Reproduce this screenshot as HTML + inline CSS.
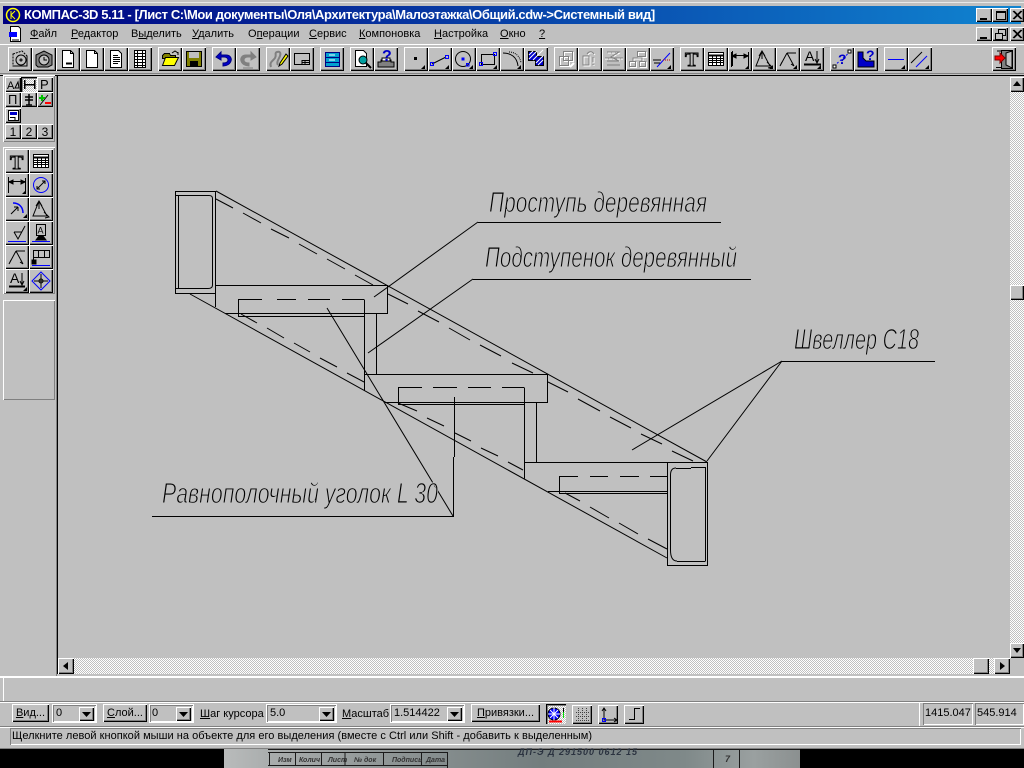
<!DOCTYPE html>
<html lang="ru"><head><meta charset="utf-8"><title>КОМПАС-3D 5.11</title>
<style>
html,body{margin:0;padding:0;background:#000}
body{width:1024px;height:768px;overflow:hidden;position:relative;font-family:"Liberation Sans",sans-serif;color:#000}
#app{position:absolute;left:0;top:0;width:1024px;height:749px;background:#c0c0c0}
#app div,#app span.m{position:absolute;box-sizing:border-box}
.b{background:#c0c0c0;box-shadow:inset 1px 1px #fff,inset -1px -1px #000,inset -2px -2px #808080}
.c{background-image:repeating-conic-gradient(#fff 0 25%,#c0c0c0 0 50%);background-size:2px 2px}
.m{font-size:11px;line-height:14px;top:27px;white-space:nowrap}
.t{font-size:11px;line-height:14px;white-space:nowrap}
.bt{text-align:center;font-size:11px;line-height:16px;white-space:nowrap}
.sunk{box-shadow:inset 1px 1px #808080,inset -1px -1px #fff}
.combo{box-shadow:inset 1px 1px #808080,inset -1px -1px #fff,0 0 0 1px #fff}
.n{font-size:12px;line-height:16px;text-align:center}
svg{position:absolute;left:0;top:0}
svg text{font-family:"Liberation Sans",sans-serif}
u{text-underline-offset:1px}
</style></head><body>
<div id="app">
<!-- top chrome -->
<div style="left:0;top:2px;width:1024px;height:1px;background:#e8e8e8"></div>
<div style="left:3px;top:6px;width:1018px;height:18px;background:linear-gradient(90deg,#000080,#1084d0)"></div>
<div class="t" style="left:24px;top:7px;color:#fff;font-weight:bold;font-size:13px;line-height:16px;letter-spacing:-.4px">КОМПАС-3D 5.11 - [Лист C:\Мои документы\Оля\Архитектура\Малоэтажка\Общий.cdw-&gt;Системный вид]</div>
<div class="b" style="left:976px;top:8px;width:16px;height:14px"></div>
<div class="b" style="left:992px;top:8px;width:16px;height:14px"></div>
<div class="b" style="left:1010px;top:8px;width:14px;height:14px"></div>
<div class="b" style="left:976px;top:27px;width:16px;height:14px"></div>
<div class="b" style="left:992px;top:27px;width:16px;height:14px"></div>
<div class="b" style="left:1010px;top:27px;width:14px;height:14px"></div>
<span class="m" style="left:30px"><u>Ф</u>айл</span>
<span class="m" style="left:71px"><u>Р</u>едактор</span>
<span class="m" style="left:131px">В<u>ы</u>делить</span>
<span class="m" style="left:192px"><u>У</u>далить</span>
<span class="m" style="left:248px">О<u>п</u>ерации</span>
<span class="m" style="left:309px"><u>С</u>ервис</span>
<span class="m" style="left:359px"><u>К</u>омпоновка</span>
<span class="m" style="left:434px"><u>Н</u>астройка</span>
<span class="m" style="left:500px"><u>О</u>кно</span>
<span class="m" style="left:539px"><u>?</u></span>
<div style="left:0;top:44px;width:1024px;height:1px;background:#fff"></div>
<div style="left:0;top:73px;width:1024px;height:1px;background:#808080"></div>
<div style="left:0;top:75px;width:1024px;height:1px;background:#000"></div>
<!-- toolbar buttons -->
<div class="b" style="left:8px;top:47px;width:24px;height:24px"></div>
<div class="b" style="left:32px;top:47px;width:24px;height:24px"></div>
<div class="b" style="left:56px;top:47px;width:24px;height:24px"></div>
<div class="b" style="left:80px;top:47px;width:24px;height:24px"></div>
<div class="b" style="left:104px;top:47px;width:24px;height:24px"></div>
<div class="b" style="left:128px;top:47px;width:24px;height:24px"></div>
<div class="b" style="left:158px;top:47px;width:24px;height:24px"></div>
<div class="b" style="left:182px;top:47px;width:24px;height:24px"></div>
<div class="b" style="left:212px;top:47px;width:24px;height:24px"></div>
<div class="b" style="left:236px;top:47px;width:24px;height:24px"></div>
<div class="b" style="left:266px;top:47px;width:24px;height:24px"></div>
<div class="b" style="left:290px;top:47px;width:24px;height:24px"></div>
<div class="b" style="left:320px;top:47px;width:24px;height:24px"></div>
<div class="b" style="left:350px;top:47px;width:24px;height:24px"></div>
<div class="b" style="left:374px;top:47px;width:24px;height:24px"></div>
<div class="b" style="left:404px;top:47px;width:24px;height:24px"></div>
<div class="b" style="left:428px;top:47px;width:24px;height:24px"></div>
<div class="b" style="left:452px;top:47px;width:24px;height:24px"></div>
<div class="b" style="left:476px;top:47px;width:24px;height:24px"></div>
<div class="b" style="left:500px;top:47px;width:24px;height:24px"></div>
<div class="b" style="left:524px;top:47px;width:24px;height:24px"></div>
<div class="b" style="left:554px;top:47px;width:24px;height:24px"></div>
<div class="b" style="left:578px;top:47px;width:24px;height:24px"></div>
<div class="b" style="left:602px;top:47px;width:24px;height:24px"></div>
<div class="b" style="left:626px;top:47px;width:24px;height:24px"></div>
<div class="b" style="left:650px;top:47px;width:24px;height:24px"></div>
<div class="b" style="left:680px;top:47px;width:24px;height:24px"></div>
<div class="b" style="left:704px;top:47px;width:24px;height:24px"></div>
<div class="b" style="left:728px;top:47px;width:24px;height:24px"></div>
<div class="b" style="left:752px;top:47px;width:24px;height:24px"></div>
<div class="b" style="left:776px;top:47px;width:24px;height:24px"></div>
<div class="b" style="left:800px;top:47px;width:24px;height:24px"></div>
<div class="b" style="left:830px;top:47px;width:24px;height:24px"></div>
<div class="b" style="left:854px;top:47px;width:24px;height:24px"></div>
<div class="b" style="left:884px;top:47px;width:24px;height:24px"></div>
<div class="b" style="left:908px;top:47px;width:24px;height:24px"></div>
<div class="b" style="left:992px;top:47px;width:24px;height:24px"></div>
<!-- left panels -->
<div style="left:3px;top:75px;width:52px;height:67px;box-shadow:inset 1px 1px #fff,inset -1px -1px #808080"></div>
<div class="b" style="left:5px;top:77px;width:16px;height:15px"></div>
<div class="c" style="left:21px;top:77px;width:16px;height:15px;box-shadow:inset 1px 1px #000,inset 2px 2px #808080"></div>
<div class="b" style="left:37px;top:77px;width:16px;height:15px"></div>
<div class="b" style="left:5px;top:92px;width:16px;height:15px"></div>
<div class="b" style="left:21px;top:92px;width:16px;height:15px"></div>
<div class="b" style="left:37px;top:92px;width:16px;height:15px"></div>
<div class="b" style="left:5px;top:108px;width:16px;height:15px"></div>
<div class="b n" style="left:5px;top:124px;width:16px;height:15px">1</div>
<div class="b n" style="left:21px;top:124px;width:16px;height:15px">2</div>
<div class="b n" style="left:37px;top:124px;width:16px;height:15px">3</div>
<div style="left:3px;top:147px;width:52px;height:147px;box-shadow:inset 1px 1px #fff,inset -1px -1px #808080"></div>
<div class="b" style="left:5px;top:149px;width:24px;height:24px"></div><div class="b" style="left:29px;top:149px;width:24px;height:24px"></div>
<div class="b" style="left:5px;top:173px;width:24px;height:24px"></div><div class="b" style="left:29px;top:173px;width:24px;height:24px"></div>
<div class="b" style="left:5px;top:197px;width:24px;height:24px"></div><div class="b" style="left:29px;top:197px;width:24px;height:24px"></div>
<div class="b" style="left:5px;top:221px;width:24px;height:24px"></div><div class="b" style="left:29px;top:221px;width:24px;height:24px"></div>
<div class="b" style="left:5px;top:245px;width:24px;height:24px"></div><div class="b" style="left:29px;top:245px;width:24px;height:24px"></div>
<div class="b" style="left:5px;top:269px;width:24px;height:24px"></div><div class="b" style="left:29px;top:269px;width:24px;height:24px"></div>
<div style="left:3px;top:300px;width:52px;height:100px;box-shadow:inset 1px 1px #fff,inset -1px -1px #808080"></div>
<!-- canvas border -->
<div style="left:56px;top:76px;width:1px;height:600px;background:#808080"></div>
<div style="left:57px;top:76px;width:1px;height:598px;background:#000"></div>
<!-- scrollbars -->
<div class="c" style="left:1010px;top:92px;width:14px;height:551px"></div>
<div class="b" style="left:1010px;top:77px;width:14px;height:15px"></div>
<div class="b" style="left:1010px;top:285px;width:14px;height:15px"></div>
<div class="b" style="left:1010px;top:643px;width:14px;height:15px"></div>
<div class="c" style="left:74px;top:658px;width:920px;height:16px"></div>
<div class="b" style="left:58px;top:658px;width:16px;height:16px"></div>
<div class="b" style="left:973px;top:658px;width:16px;height:16px"></div>
<div class="b" style="left:994px;top:658px;width:16px;height:16px"></div>
<!-- bottom -->
<div style="left:0;top:676px;width:1024px;height:2px;background:#fff"></div>
<div style="left:3px;top:678px;width:1px;height:24px;background:#fff"></div>
<div style="left:0;top:701px;width:1024px;height:1px;background:#808080"></div>
<div style="left:0;top:702px;width:1024px;height:1px;background:#fff"></div>
<div class="b bt" style="left:12px;top:704px;width:37px;height:18px;padding-top:1px"><u>В</u>ид...</div>
<div class="combo" style="left:53px;top:705px;width:43px;height:17px"></div>
<div class="t" style="left:56px;top:706px">0</div>
<div class="b" style="left:79px;top:707px;width:15px;height:14px"></div>
<div class="b bt" style="left:103px;top:704px;width:44px;height:18px;padding-top:1px"><u>С</u>лой...</div>
<div class="combo" style="left:150px;top:705px;width:43px;height:17px"></div>
<div class="t" style="left:152px;top:706px">0</div>
<div class="b" style="left:176px;top:707px;width:15px;height:14px"></div>
<div class="t" style="left:200px;top:707px"><u>Ш</u>аг курсора</div>
<div class="combo" style="left:267px;top:705px;width:69px;height:17px"></div>
<div class="t" style="left:270px;top:706px">5.0</div>
<div class="b" style="left:319px;top:707px;width:15px;height:14px"></div>
<div class="t" style="left:342px;top:707px"><u>М</u>асштаб</div>
<div class="combo" style="left:391px;top:705px;width:73px;height:17px"></div>
<div class="t" style="left:394px;top:706px">1.514422</div>
<div class="b" style="left:447px;top:707px;width:15px;height:14px"></div>
<div class="b bt" style="left:471px;top:704px;width:69px;height:18px;padding-top:1px"><u>П</u>ривязки...</div>
<div class="c" style="left:546px;top:704px;width:20px;height:20px;box-shadow:inset 1px 1px #000,inset 2px 2px #808080"></div>
<div class="b" style="left:572px;top:705px;width:20px;height:19px"></div>
<div class="b" style="left:598px;top:705px;width:20px;height:19px"></div>
<div class="b" style="left:624px;top:705px;width:20px;height:19px"></div>
<div style="left:919px;top:702px;width:1px;height:24px;background:#fff"></div>
<div class="sunk" style="left:923px;top:703px;width:50px;height:22px"></div>
<div class="sunk" style="left:975px;top:703px;width:49px;height:22px"></div>
<div class="t" style="left:925px;top:706px">1415.047</div>
<div class="t" style="left:977px;top:706px">545.914</div>
<div style="left:0;top:726px;width:1024px;height:1px;background:#808080"></div>
<div style="left:0;top:727px;width:1024px;height:1px;background:#fff"></div>
<div class="sunk" style="left:10px;top:728px;width:1011px;height:17px"></div>
<div class="t" style="left:12px;top:729px;letter-spacing:.03px">Щелкните левой кнопкой мыши на объекте для его выделения (вместе с Ctrl или Shift - добавить к выделенным)</div>
<div style="left:0;top:748px;width:1024px;height:1px;background:#808080"></div>
</div>
<!-- photo strip -->
<div style="position:absolute;left:224px;top:749px;width:576px;height:19px;background:linear-gradient(90deg,#b9bbbb 0,#a9adad 8%,#8d9494 30%,#737d7e 55%,#7f8989 80%,#9aa0a0 92%,#8b9090 100%)"></div>
<svg width="1024" height="768" viewBox="0 0 1024 768" fill="none" stroke="#000" stroke-width="1">
<!-- window glyphs -->
<g shape-rendering="crispEdges">
<path d="M980 19.5h7M980 18.5h7M996.5 11.5h9v8h-9zM996.5 12.5h9M980 38.5h7M980 37.5h7M995.5 33.5h7v6h-7zM998.5 33v-3.500h7v6h-3"/>
</g>
<path d="M1013 11l8 8M1021 11l-8 8M1014 11l8 8M1022 11l-8 8M1013 30l8 8M1021 30l-8 8M1014 30l8 8M1022 30l-8 8"/>
<!-- app icon -->
<circle cx="13" cy="15" r="6.500" stroke="#ffff00" stroke-width="1.500" fill="#000080"/><path d="M11 11v8M15 11l-4 4 4 4" stroke="#ffff00"/>
<!-- menu doc icon -->
<g transform="translate(9,26)"><path d="M1.500 .5h8l2 2v13h-10z" fill="#fff"/><rect x="0" y="6" width="8" height="5" fill="#0000ff" stroke="none"/><path d="M3 14h7" /></g>
<!-- toolbar icons -->
<g transform="translate(8,47)"><path d="M5 7l9-3 5 5v10H5z" fill="#c0c0c0" stroke-dasharray="2 1"/><path d="M5 19h14V9"/><circle cx="13" cy="13" r="5"/><circle cx="13" cy="13" r="1"/></g>
<g transform="translate(32,47)"><path d="M4 8l8-4 8 4v10l-4 2H6l-2-2z" fill="#808080"/><circle cx="12" cy="13" r="5" fill="#c0c0c0"/><path d="M12 10v3h3"/></g>
<g transform="translate(56,47)" shape-rendering="crispEdges"><path d="M6.500 3.500h8l3 3v14h-11z" fill="#fff"/><path d="M14.500 3.500v3h3M10 17h6M10 16h6" /></g>
<g transform="translate(80,47)" shape-rendering="crispEdges"><path d="M6.500 3.500h8l3 3v14h-11z" fill="#fff"/><path d="M14.500 3.500v3h3"/></g>
<g transform="translate(104,47)" shape-rendering="crispEdges"><path d="M6.500 3.500h8l3 3v14h-11z" fill="#fff"/><path d="M9 8.500h5M9 10.500h7M9 12.500h7M9 14.500h7M9 16.500h5" /></g>
<g transform="translate(128,47)" shape-rendering="crispEdges"><path d="M6.500 3.500h11v17h-11z" fill="#fff"/><path d="M9.500 3.500v17M14.500 3.500v17M6.500 6.500h11M6.500 9.500h11M6.500 12.500h11M6.500 15.500h11M6.500 18.500h11"/></g>
<g transform="translate(158,47)"><path d="M4.500 8.500l2-2h5l1 2h5v3h-13z" fill="#808000" shape-rendering="crispEdges"/><path d="M4.500 18.500l3-8h13l-4 8z" fill="#ffff00"/><path d="M14 6l3-2 3 2M20 5v3" /></g>
<g transform="translate(182,47)" shape-rendering="crispEdges"><rect x="4.500" y="4.500" width="15" height="15" fill="#808000"/><rect x="7" y="5" width="10" height="6" fill="#c0c0c0" stroke="none"/><rect x="8" y="14" width="8" height="5" fill="#000" stroke="none"/></g>
<g transform="translate(212,47)"><path d="M4 10l5-5v3h5c4 0 6 3 5 6s-4 5-8 5v-3c3 0 5-1 5-3s-2-3-4-3H9v3z" fill="#0000c8" stroke="#000080"/></g>
<g transform="translate(236,47)"><path d="M20 10l-5-5v3h-5c-4 0-6 3-5 6s4 5 8 5v-3c-3 0-5-1-5-3s2-3 4-3h3v3z" fill="#808080" stroke="#808080"/><path d="M7 21h10" stroke="#808080"/></g>
<g transform="translate(266,47)"><path d="M5 20c-2-5 2-6 4-9s-1-5 2-6 4 1 3 4-4 6-2 9" stroke="#808080" stroke-width="2"/><path d="M14 16l6-9 2 2-6 8-3 2z" fill="#ffff00"/></g>
<g transform="translate(290,47)" shape-rendering="crispEdges"><rect x="4.500" y="6.500" width="15" height="11" fill="#c0c0c0"/><path d="M12 13.500h7M12 15.500h7M12 13v4M15 13v4" /></g>
<g transform="translate(320,47)" shape-rendering="crispEdges"><rect x="5.500" y="5.500" width="14" height="14" fill="#00a0d0" stroke="#000080"/><path d="M5.500 10.500h14M5.500 15.500h14" stroke="#000080"/><path d="M9 8h6M9 13h6" stroke="#fff"/></g>
<g transform="translate(350,47)"><path d="M5.500 3.500h8l3 3v13h-11z" fill="#fff"/><circle cx="13" cy="13" r="4" fill="#00a0a0"/><path d="M16 16l5 5" stroke-width="2"/></g>
<g transform="translate(374,47)"><path d="M4 15h3v-2h10v2h3v5H4z" fill="#808080"/><rect x="8" y="11" width="8" height="3" fill="#fff"/><text x="8" y="14" fill="#0000c8" stroke="none" font-size="16" font-weight="bold">?</text></g>
<g transform="translate(404,47)" shape-rendering="crispEdges"><rect x="10" y="10" width="3" height="3" fill="#000" stroke="none"/></g>
<g transform="translate(428,47)"><path d="M4 17l14-7"/><rect x="2.500" y="15.500" width="3" height="3" stroke="#0000ff" shape-rendering="crispEdges"/><rect x="17.500" y="8.500" width="3" height="3" stroke="#0000ff" shape-rendering="crispEdges"/></g>
<g transform="translate(452,47)"><circle cx="11" cy="12" r="7.500"/><rect x="10" y="11" width="2" height="2" fill="#0000ff" stroke="#0000ff"/><rect x="14.500" y="16.500" width="2.500" height="2.500" stroke="#0000ff"/></g>
<g transform="translate(476,47)" shape-rendering="crispEdges"><rect x="5.500" y="7.500" width="13" height="10"/><rect x="3.500" y="15.500" width="3" height="3" stroke="#0000ff"/><rect x="17.500" y="5.500" width="3" height="3" stroke="#0000ff"/></g>
<g transform="translate(500,47)"><path d="M3 6c8 0 14 4 15 13"/><path d="M9 5c6 0 11 4 12 11" stroke-dasharray="1 1"/></g>
<g transform="translate(524,47)"><path d="M4.500 4.500h8v5h7v9h-8v-5h-7z" fill="#0000c8" shape-rendering="crispEdges"/><path d="M5 8l4-4M5 12l8-8M9 13l10-10M12 16l7-7M14 18l5-5" stroke="#fff"/></g>
<g transform="translate(554,47)" fill="none"><g stroke="#fff" shape-rendering="crispEdges"><rect x="6.500" y="10.500" width="9" height="9"/><rect x="10.500" y="5.500" width="9" height="9"/></g><path d="M16 20l4-4" stroke="#fff" stroke-width="2"/><g stroke="#808080" shape-rendering="crispEdges"><rect x="5.500" y="9.500" width="9" height="9"/><rect x="9.500" y="4.500" width="9" height="9"/></g></g>
<g transform="translate(578,47)"><path d="M6 10h6v9H6zM10 8c2-3 5-3 7 0M16 11v5M16 18v1" stroke="#fff"/><path d="M5 9h6v9H5zM9 7c2-3 5-3 7 0M15 10v5M15 17v1" stroke="#808080"/></g>
<g transform="translate(602,47)"><path d="M6 6h12l-9 5 9 3H6M3 12h18" stroke="#fff" stroke-dasharray="3 1"/><path d="M5 5h12l-8 5 8 4H5M3 11h18M5 18h13" stroke="#808080"/></g>
<g transform="translate(626,47)" shape-rendering="crispEdges"><g stroke="#fff"><rect x="12.500" y="5.500" width="8" height="5"/><rect x="4.500" y="15.500" width="6" height="5"/><rect x="14.500" y="15.500" width="6" height="5"/><path d="M8 15v-3h9v3"/></g><g stroke="#808080"><rect x="11.500" y="4.500" width="8" height="5"/><rect x="3.500" y="14.500" width="6" height="5"/><rect x="13.500" y="14.500" width="6" height="5"/><path d="M7 14v-3h9v3"/></g></g>
<g transform="translate(650,47)"><path d="M4 16h6" /><path d="M7 20L20 6" stroke="#0000ff"/><path d="M13 13h7" stroke="#c00000" stroke-dasharray="1 1"/><path d="M3 13h8"/></g>
<g transform="translate(680,47)"><text x="5" y="19" font-size="20" style="font-family:'Liberation Serif'" fill="#c0c0c0" stroke="#000" font-weight="bold">T</text></g>
<g transform="translate(704,47)" shape-rendering="crispEdges"><rect x="4.500" y="5.500" width="15" height="13" fill="#fff"/><path d="M4.500 8.500h15" stroke-width="2"/><path d="M4.500 11.500h15M4.500 13.500h15M4.500 15.500h15M8.500 8v10M12.500 8v10M16.500 8v10" /></g>
<g transform="translate(728,47)"><path d="M4.500 4v15M20.500 5v15M3.500 5v15" shape-rendering="crispEdges"/><path d="M4 8.500h16M4 9l4-2v4zM20 9l-4-2v4z" fill="#000"/></g>
<g transform="translate(752,47)"><path d="M10 4L4 19h14zM10 4v8M7 9l3-5 3 5M15 15l5 5-4 1" /></g>
<g transform="translate(776,47)"><path d="M11 6L4 19M11 6h9M11 6l7 13M4 19l2-4M18 19l-3-2" /></g>
<g transform="translate(800,47)"><text x="5" y="14" font-size="14" fill="#000" stroke="none">A</text><path d="M17 4v11M15 12l2 4 2-4"/><path d="M4 17.500h17" stroke-width="2"/></g>
<g transform="translate(830,47)"><path d="M4 19L20 5" stroke="#0000ff" stroke-dasharray="2 2"/><rect x="3" y="18" width="3" height="3" fill="#fff"/><rect x="18" y="3" width="3" height="3" fill="#fff"/><text x="8" y="17" fill="#0000c8" stroke="none" font-size="14" font-weight="bold">?</text></g>
<g transform="translate(854,47)"><path d="M4 5v15h16v-6h-8l-3-3V5z" fill="#0000c8"/><text x="12" y="13" fill="#0000c8" stroke="none" font-size="14" font-weight="bold">?</text></g>
<g transform="translate(884,47)" shape-rendering="crispEdges"><path d="M4 12.500h16" stroke="#0000ff"/></g>
<g transform="translate(908,47)"><path d="M3 16L14 5" /><path d="M8 20L19 9" stroke="#0000ff"/></g>
<g transform="translate(992,47)"><path d="M9.500 3.500h11v18h-11z" fill="#808080" shape-rendering="crispEdges"/><path d="M14 6l6-2v17l-6-3z" fill="#c0c0c0"/><path d="M4 20.500h5M5 4h4"/><path d="M3 9h5V6l5 5-5 5v-3H3z" fill="#ff0000" stroke="#800000"/></g>
<!-- corner triangles on toolbar -->
<g fill="#000" stroke="none"><path d="M425 65v4h-4zM449 65v4h-4zM473 65v4h-4zM497 65v4h-4zM521 65v4h-4zM671 65v4h-4zM749 65v4h-4zM773 65v4h-4zM797 65v4h-4zM821 65v4h-4zM905 65v4h-4zM929 65v4h-4z"/></g>
<!-- left panel small icons -->
<text x="7" y="89" font-size="11" fill="#000" stroke="none">А</text><path d="M15 88l3-6 1 6z"/>
<path d="M24.500 80v9M34.500 80v9M24 84.500h11" shape-rendering="crispEdges" stroke-width="1.500"/>
<text x="40" y="89" font-size="13" fill="#000" stroke="none">Р</text>
<text x="8" y="104" font-size="13" fill="#000" stroke="none">П</text>
<path d="M29 94v11M25 97h8M25 100h8M26 105h6" stroke-width="1.500"/>
<path d="M40 105l8-10" stroke="#000"/><path d="M39 98h6M42 95v6" stroke="#00c000" stroke-width="2"/><path d="M45 103h6" stroke="#ff0000" stroke-width="2"/>
<g shape-rendering="crispEdges"><rect x="8.500" y="110.500" width="10" height="10" fill="#fff"/><rect x="10" y="112" width="7" height="3" fill="#0000c8" stroke="none"/><path d="M10 117.500h5v3"/></g>
<!-- left panel large icons -->
<text x="10" y="169" font-size="20" style="font-family:'Liberation Serif'" fill="#c0c0c0" stroke="#000" font-weight="bold">T</text>
<g transform="translate(29,149)" shape-rendering="crispEdges"><rect x="4.500" y="5.500" width="15" height="13" fill="#fff"/><path d="M4.500 8.500h15" stroke-width="2"/><path d="M4.500 11.500h15M4.500 13.500h15M4.500 15.500h15M8.500 8v10M12.500 8v10M16.500 8v10"/></g>
<g transform="translate(5,173)"><path d="M3.500 4v16M20.500 5v16M4 8.500h16M4 9l4-2v4zM20 9l-4-2v4z" fill="#000"/><path d="M17 21h4v-4z" fill="#000" stroke="none"/></g>
<g transform="translate(29,173)"><circle cx="12" cy="12" r="7.500" stroke="#0000ff"/><path d="M8 16l8-8M8 13v3h3M13 8h3v3"/></g>
<g transform="translate(5,197)"><path d="M8 6c6 0 10 4 10 10" stroke="#0000ff" stroke-width="1.500"/><path d="M6 17l7-7M13 10v4M13 10H9"/><path d="M18 21h4v-4z" fill="#000" stroke="none"/></g>
<g transform="translate(29,197)"><path d="M10 4L4 19h14zM10 4v8M7 9l3-5 3 5M15 15l5 5-4 1"/></g>
<g transform="translate(5,221)"><path d="M9 11l4 7 7-13M9 11h8" /><path d="M3 20.500h18" stroke="#0000ff"/></g>
<g transform="translate(29,221)"><rect x="7.500" y="3.500" width="9" height="11" shape-rendering="crispEdges"/><text x="8.500" y="12.500" font-size="9" fill="#000" stroke="none">А</text><path d="M10 15h4l3 4H7z" fill="#000"/><path d="M3 20.500h18" stroke="#0000ff"/></g>
<g transform="translate(5,245)"><path d="M11 6L4 19M11 6h9M11 6l7 13M4 19l2-4M18 19l-3-2"/></g>
<g transform="translate(29,245)" shape-rendering="crispEdges"><path d="M4.500 5.500h16v7h-16zM4.500 12v6M9.500 5.500v7M15.500 5.500v7"/><rect x="3" y="15" width="4" height="4" fill="#000"/><path d="M3 20.500h18" stroke="#0000ff"/></g>
<g transform="translate(5,269)"><text x="5" y="14" font-size="14" fill="#000" stroke="none">A</text><path d="M17 4v11M15 12l2 4 2-4"/><path d="M4 17.500h16" stroke-width="2"/><path d="M18 22h4v-4z" fill="#000" stroke="none"/></g>
<g transform="translate(29,269)"><path d="M12 3l9 9-9 9-9-9z" stroke="#0000ff"/><path d="M12 5v14M5 12h14"/><circle cx="12" cy="12" r="2"/></g>
<!-- scroll arrows and combo arrows -->
<g fill="#000" stroke="none">
<path d="M1017 81l4 5h-8zM1013 648h8l-4 5zM68 662v8l-5-4zM1000 662v8l5-4z"/>
<path d="M82 712h9l-4.500 5zM179 712h9l-4.500 5zM322 712h9l-4.500 5zM450 712h9l-4.500 5z"/>
</g>
<!-- bottom toggle icons -->
<g transform="translate(546,704)"><circle cx="8" cy="10" r="6" fill="#0000ff"/><path d="M2 10h12M8 3v14M4 6l8 8M12 6l-8 8" stroke="#fff"/><path d="M3 17.500h13" stroke="#ff0000" stroke-width="2"/><path d="M17.500 4v8" stroke="#000"/><path d="M17.500 8v6" stroke="#00e000"/></g>
<path d="M576 712.500h13M576 716.500h13M576 720.500h13M578.500 708v14M582.500 708v14M586.500 708v14" stroke="#404040" stroke-dasharray="1 1" shape-rendering="crispEdges"/>
<g><path d="M604 708v12h13M602 711l2-3 2 3M614 718l3 2-3 2"/><rect x="602.500" y="718.500" width="3" height="3" stroke="#0000ff" shape-rendering="crispEdges"/></g>
<path d="M629 719.500h5.500v-11H640" shape-rendering="crispEdges"/>
<!-- DRAWING -->
<g shape-rendering="crispEdges" stroke-width="1">
<!-- left box -->
<path d="M175.500 191.500h40v102h-40zM178.500 195.500v93M178 195.500h31M212.500 198.500v87M178 288.500h30"/>
<path d="M175.500 195.500h3M175.500 288.500h3"/>
<!-- step 1 -->
<path d="M215.500 285.500h172v28h-162M215.500 285v22M238.500 299.500v17h126M364.500 299.500v91M376.500 313v61"/>
<path d="M238 299.500h24M277 299.500h19M308 299.500h22M342 299.500h22"/>
<!-- step 2 -->
<path d="M364 374.500h183.500v28H385M547.500 374v28M398.500 387.500v17M398 404.500h126M524.500 387.500v91M536.500 402v60"/>
<path d="M398 387.500h24M433 387.500h24M468 387.500h23M502 387.500h22"/>
<!-- step 3 -->
<path d="M524 462.500h183M548 491.500h119M559.500 476.500v17M559 493.500h108"/>
<path d="M559 476.500h19M590 476.500h18M620 476.500h19M650 476.500h17"/>
<!-- right box -->
<path d="M667.500 462.500h40v103h-40zM670.500 475v75M691 467.500h14.500v94M676 468.500h15M677 561.500h28"/>
<!-- horizontals -->
<path d="M478 222.500h243M473 279.500h278M782 361.500h153M152 516.500h302M454.500 397v60M453.500 457v59"/>
</g>
<g stroke-width="1">
<path d="M670.500 475Q670.500 468 676 468M670.500 550Q670.500 561 677 561M209 195.500Q212.500 195.500 212.500 198.500M212.500 285Q212.500 288.500 208 288.500"/>
<path d="M216 191L707 462M190 294L667 558"/>
<path d="M216 199l17 9M243 213l18 10M271 229l18 9M299 244l18 10M327 259l18 10M355 275l18 10M388 294l20 10M418 311l21 11M449 328l21 12M480 345l21 11M512 363l21 10M548 382l20 10M578 399l22 12M610 417l21 11M641 434l21 10M672 451l21 10"/>
<path d="M241 314l16 9M267 328l17 10M294 343l16 9M320 358l17 9M347 373l17 9M398 403l19 8M427 418l17 8M455 433l16 8M481 448l17 8M508 462l15 8M565 493l15 8M590 507l19 11M619 523l19 11M648 539l19 10"/>
<!-- leaders -->
<path d="M374 297L478 222M368 353L473 279M632 450L782 361M707 461L782 361M327 308L453 516"/>
</g>
<!-- drawing text -->
<g fill="#000" stroke="#c0c0c0" stroke-width="1" font-style="italic" font-size="29">
<text x="489" y="212" textLength="218" lengthAdjust="spacingAndGlyphs">Проступь деревянная</text>
<text x="485" y="267" textLength="252" lengthAdjust="spacingAndGlyphs">Подступенок деревянный</text>
<text x="794" y="349" textLength="125" lengthAdjust="spacingAndGlyphs">Швеллер С18</text>
<text x="162" y="503" textLength="276" lengthAdjust="spacingAndGlyphs">Равнополочный уголок L 30</text>
</g>
<!-- photo strip content -->
<g stroke="#1a1a1a" shape-rendering="crispEdges">
<path d="M268 749.500h532M269.500 752v14M295.500 752v14M321.500 752v14M345 752v14M383.500 752v14M421.500 752v14M447.500 752v18M268 752.500h180M268 765.500h180M713.500 750v18M739.500 750v18"/>
</g>
<g fill="#333" stroke="none" font-size="8" font-style="italic" font-weight="bold">
<text x="278" y="762" font-size="7">Изм</text><text x="299" y="762" font-size="7">Колич</text><text x="328" y="762" font-size="7">Лист</text><text x="354" y="762" font-size="7">№ док</text><text x="392" y="762" font-size="7">Подпись</text><text x="426" y="762" font-size="7">Дата</text>
<text x="518" y="755" font-size="9" letter-spacing="1" fill="#2b3340">ДП-Э Д 291500 0612 15</text>
<text x="725" y="762" font-size="9">7</text>
</g>
</svg>
</body></html>
